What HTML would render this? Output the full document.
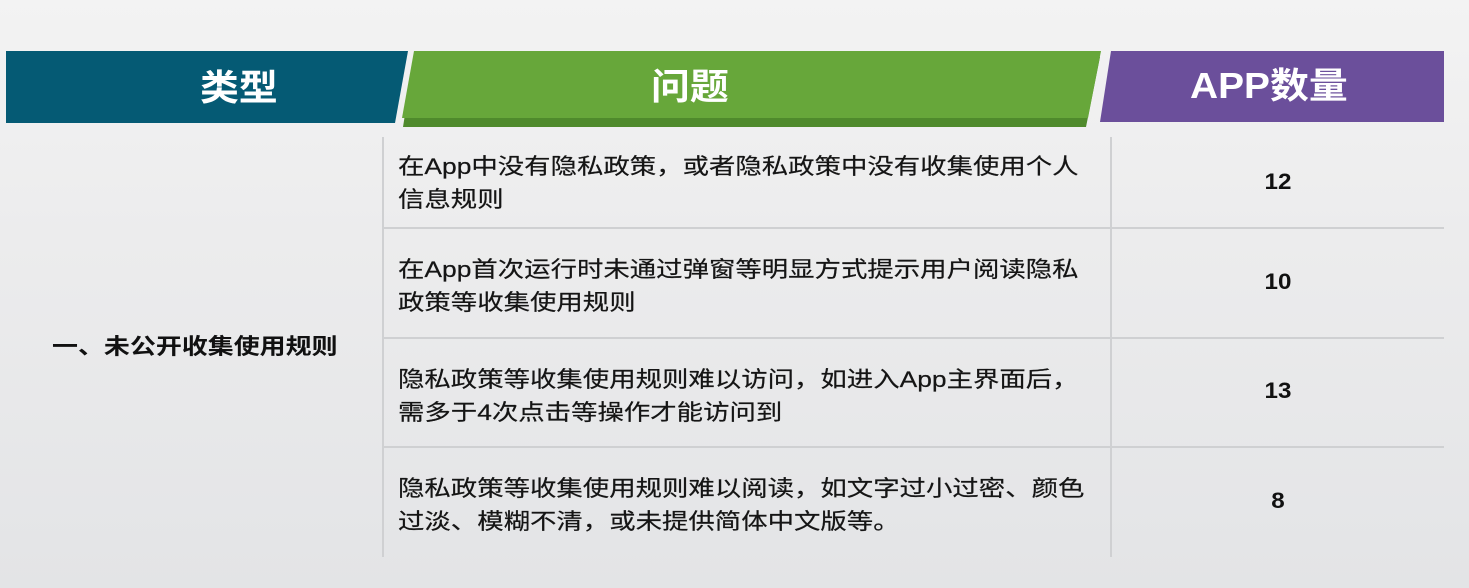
<!DOCTYPE html>
<html><head><meta charset="utf-8"><style>
html,body{margin:0;padding:0}
body{width:1469px;height:588px;overflow:hidden;position:relative;
background:linear-gradient(180deg,#f3f3f3 0%,#ececed 40%,#e3e4e6 100%);
font-family:"Liberation Sans","Noto Sans CJK SC",sans-serif;}
.a{position:absolute}
.t{position:absolute;white-space:nowrap;transform-origin:0 0}
.hd{color:#fff;font-weight:bold;font-size:36px;line-height:36px;transform:scaleX(1.08)}
.p{color:#151515;font-size:22px;line-height:33px;transform:scaleX(1.2);-webkit-text-stroke:0.2px #151515}
.n{color:#111;font-weight:bold;font-size:22px;line-height:22px;width:60px;text-align:center;transform:scaleX(1.1)}
</style></head><body>
<svg class="a" style="left:0;top:0" width="1469" height="140">
<polygon points="6,51 408,51 395,123 6,123" fill="#055a74"/>
<polygon points="414,57 1100,57 1086,127 403,127" fill="#4f8a2c"/>
<polygon points="414,51 1101,51 1088,118 402,118" fill="#67a73a"/>
<polygon points="1111,51 1444,51 1444,122 1100,122" fill="#6b4f9b"/>
</svg>
<div class="t hd" style="left:200px;top:70px">类型</div>
<div class="t hd" style="left:651px;top:69px">问题</div>
<div class="t hd" style="left:1190px;top:68px">APP数量</div>

<div class="a" style="left:382px;top:137px;width:2px;height:420px;background:#cfd0d2"></div>
<div class="a" style="left:1110px;top:137px;width:2px;height:420px;background:#cfd0d2"></div>
<div class="a" style="left:384px;top:227px;width:1060px;height:2px;background:#cfd0d2"></div>
<div class="a" style="left:384px;top:337px;width:1060px;height:2px;background:#cfd0d2"></div>
<div class="a" style="left:384px;top:446px;width:1060px;height:2px;background:#cfd0d2"></div>

<div class="t" style="left:52px;top:334px;color:#111;font-weight:bold;font-size:22px;line-height:26px;transform:scaleX(1.18)">一、未公开收集使用规则</div>

<div class="t p" style="left:398px;top:150px">在App中没有隐私政策，或者隐私政策中没有收集使用个人<br>信息规则</div>
<div class="t p" style="left:398px;top:253px">在App首次运行时未通过弹窗等明显方式提示用户阅读隐私<br>政策等收集使用规则</div>
<div class="t p" style="left:398px;top:363px">隐私政策等收集使用规则难以访问，如进入App主界面后，<br>需多于4次点击等操作才能访问到</div>
<div class="t p" style="left:398px;top:472px">隐私政策等收集使用规则难以阅读，如文字过小过密、颜色<br>过淡、模糊不清，或未提供简体中文版等。</div>

<div class="t n" style="left:1245px;top:171px">12</div>
<div class="t n" style="left:1245px;top:271px">10</div>
<div class="t n" style="left:1245px;top:380px">13</div>
<div class="t n" style="left:1245px;top:490px">8</div>
</body></html>
